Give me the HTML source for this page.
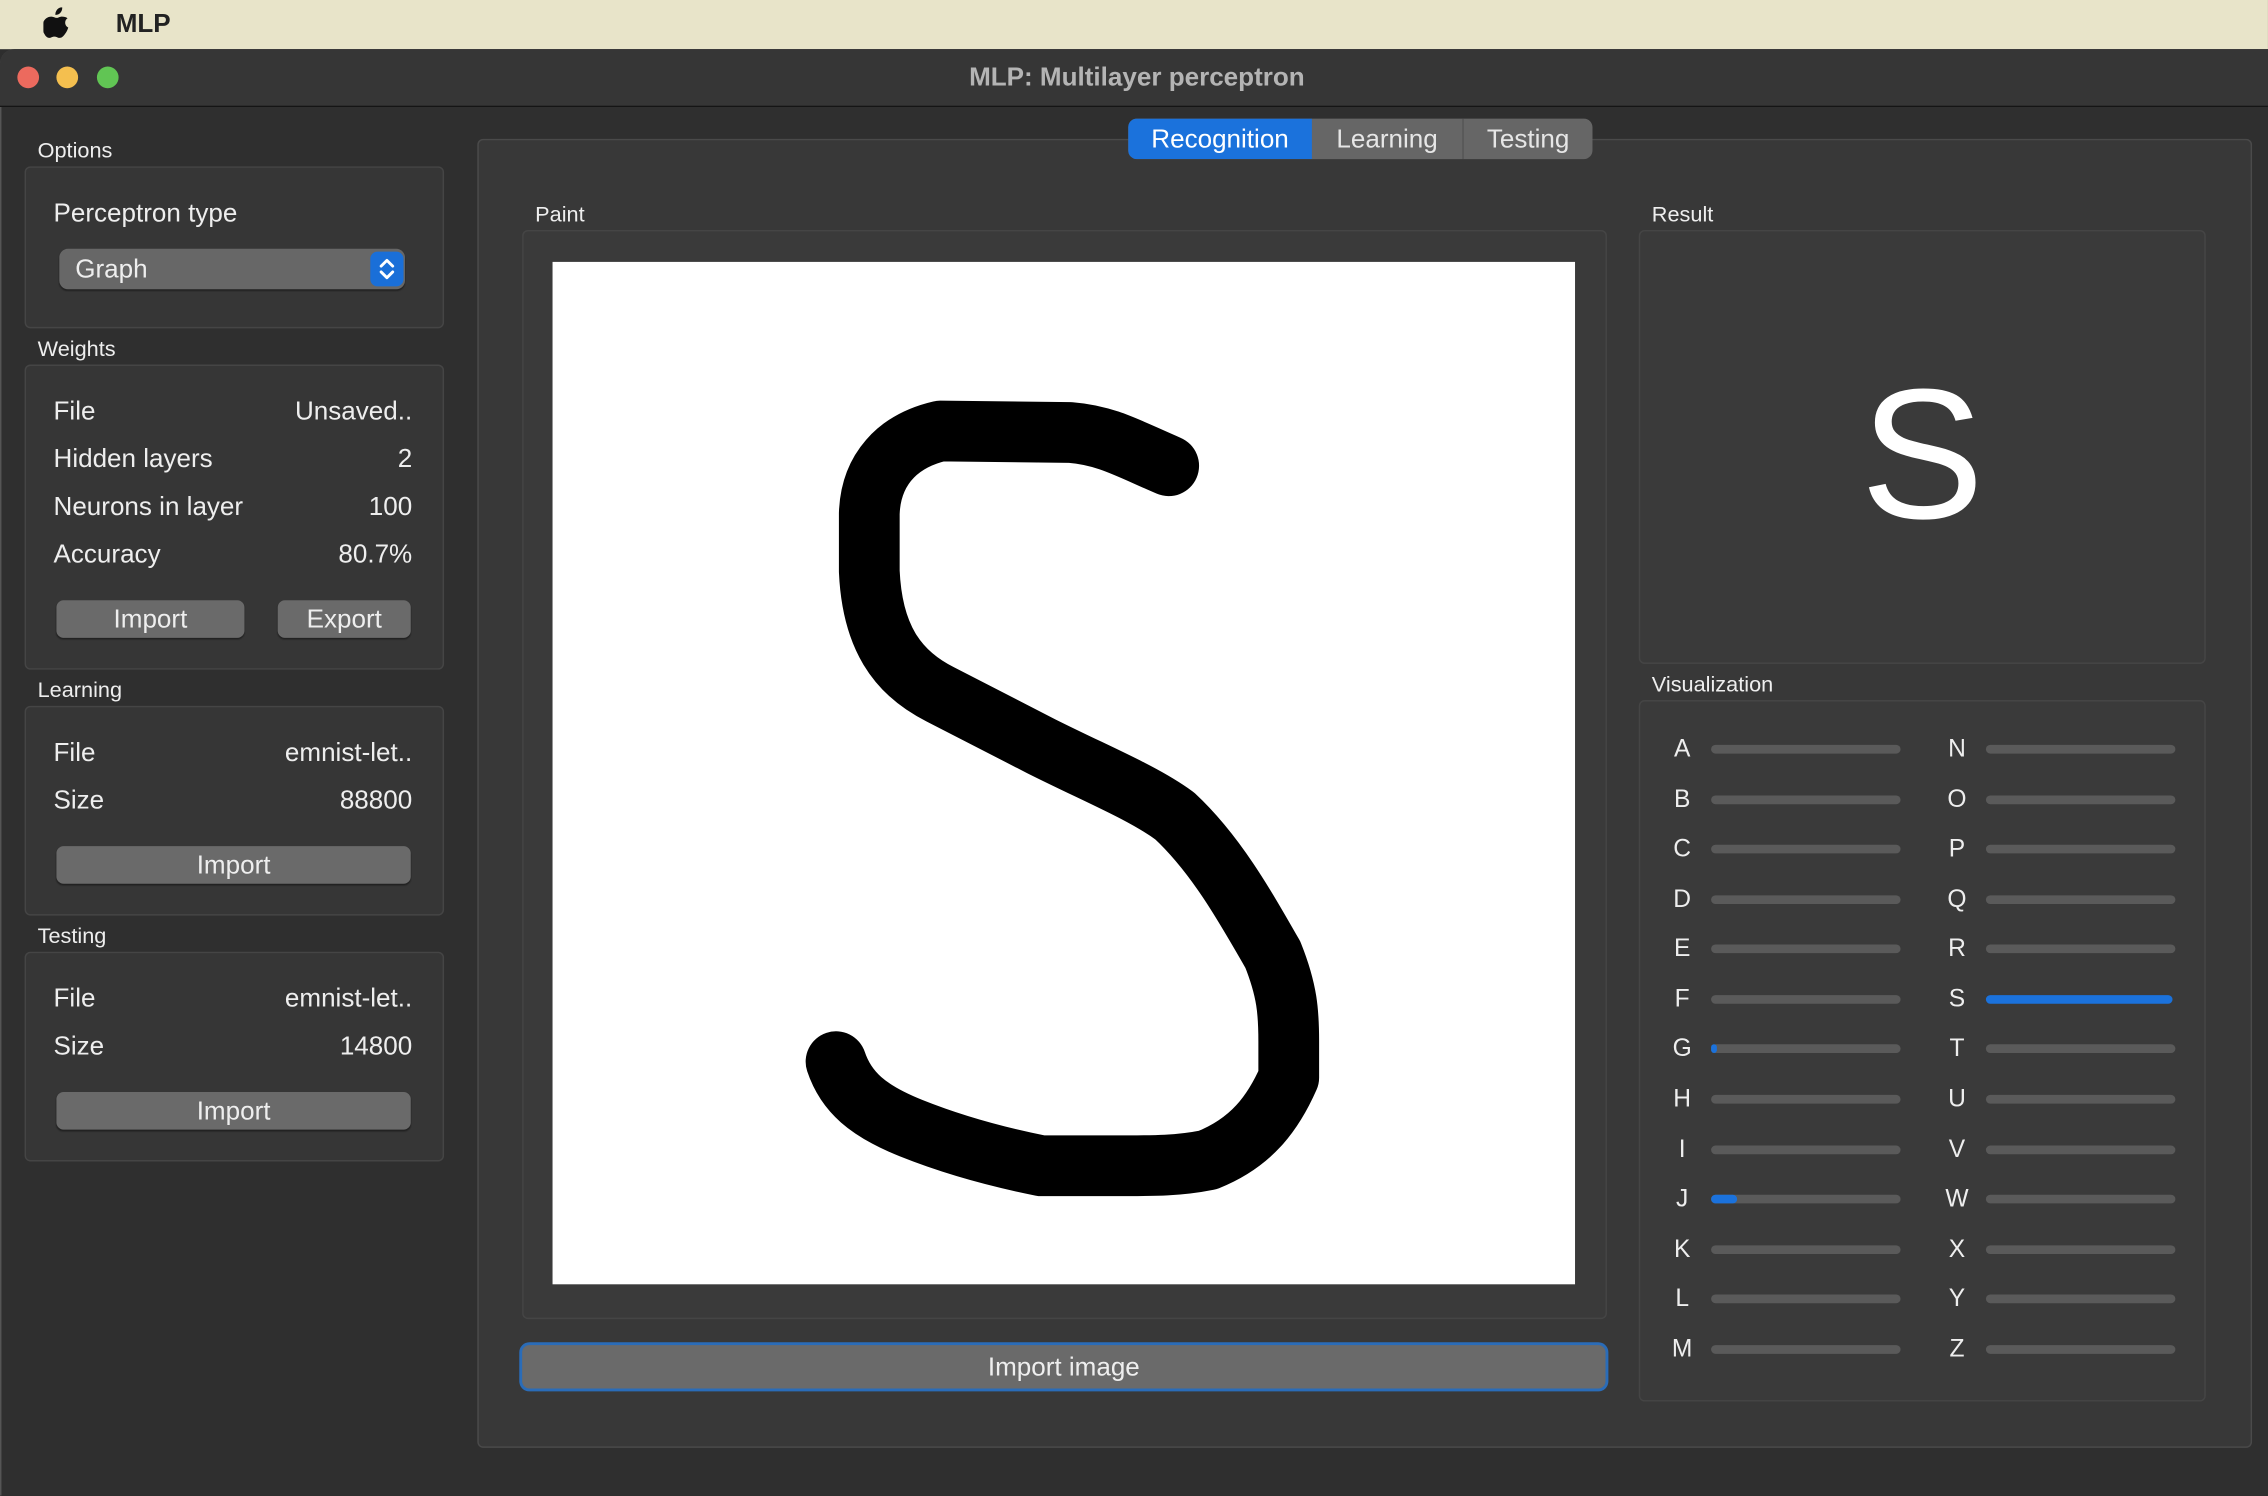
<!DOCTYPE html>
<html><head><meta charset="utf-8">
<style>
html,body{margin:0;padding:0;width:2268px;height:1464px;overflow:hidden;background:#2e2e2e;}
#w{position:absolute;left:0;top:0;width:1568px;height:1012px;transform:scale(1.4464);transform-origin:0 0;font-family:"Liberation Sans",sans-serif;color:#e6e6e6;}
.a{position:absolute;}
.menu{left:0;top:0;width:1568px;height:34px;background:#e8e4c9;}
.win{left:0;top:34px;width:1580px;height:1000px;background:#2f2f2f;border-top-left-radius:10px;border:1px solid #555;border-bottom:none;box-sizing:border-box;}
.title{left:0;top:34px;width:1568px;height:39px;background:#363636;border-top-left-radius:10px;border-bottom:1px solid #151515;}
.dot{width:15px;height:15px;border-radius:50%;top:46px;}
.lbl{font-size:15px;color:#eee;}
.box{background:#363636;border:1px solid #454545;border-radius:4px;box-sizing:border-box;}
.t{font-size:18px;color:#eee;}
.r{text-align:right;}
.btn{background:#6a6a6a;border-radius:5px;text-align:center;font-size:18px;color:#eee;box-shadow:0 1px 1px rgba(0,0,0,.4);line-height:26px;}
.let{font-size:17px;color:#eee;width:20px;text-align:center;}
.bar{height:6px;border-radius:3px;background:#5a5a5a;width:131px;}
</style></head><body><div id="w">
<div class="a menu"></div>
<svg class="a" style="left:30px;top:5px" width="19" height="22" viewBox="0 0 19 22"><path d="M13 0c.2 1.6-.5 3.2-1.5 4.1-1 1-2.3 1.3-3.2 1.2-.2-1.5.6-3 1.4-3.9C10.7.4 12.1-.1 13 0zM16.7 7.6c-2.4 1.5-2.1 5.3.5 6.4-.5 1.6-1.2 3.2-2.4 4.7-1 1.3-2 2.5-3.6 2.5-1.5 0-1.9-.9-3.6-.9s-2.2.9-3.6.9C2.400 21.200 1.300 19.700.5 18.200-1.300 14.900-1 9.800 1.900 7.700c1.100-.8 2.400-1.200 3.600-1.200 1.500 0 2.500.9 3.700.9 1.200 0 1.900-.9 3.700-.9 1.400 0 2.800.4 3.800 1.100z" fill="#111"/></svg>
<div class="a" style="left:80px;top:6px;font-size:18px;font-weight:bold;color:#222">MLP</div>
<div class="a win"></div>
<div class="a title"></div>
<div class="a dot" style="left:12px;background:#ec6a5e"></div>
<div class="a dot" style="left:39px;background:#f4bf4f"></div>
<div class="a dot" style="left:67px;background:#61c554"></div>
<div class="a" style="left:0;width:1572px;top:43px;text-align:center;font-size:18px;font-weight:bold;color:#b4b4b4">MLP: Multilayer perceptron</div>

<div class="a lbl" style="left:26px;top:96px">Options</div>
<div class="a box" style="left:17px;top:115px;width:290px;height:112px"></div>
<div class="a t" style="left:37px;top:137px">Perceptron type</div>
<div class="a" style="left:41px;top:172px;width:239px;height:28px;background:#676767;border-radius:6px;box-shadow:0 1px 1px rgba(0,0,0,.4)"></div>
<div class="a t" style="left:52px;top:176px">Graph</div>
<div class="a" style="left:256px;top:174px;width:23px;height:24px;background:#1a6fd8;border-radius:5px"></div>
<svg class="a" style="left:256px;top:174px" width="23" height="24"><path d="M7.5 10l4-4 4 4M7.5 14l4 4 4-4" stroke="#fff" stroke-width="2" fill="none" stroke-linecap="round" stroke-linejoin="round"/></svg>

<div class="a lbl" style="left:26px;top:233px">Weights</div>
<div class="a box" style="left:17px;top:252px;width:290px;height:211px"></div>
<div class="a t" style="left:37px;top:274px">File</div><div class="a t r" style="left:150px;width:135px;top:274px">Unsaved..</div>
<div class="a t" style="left:37px;top:307px">Hidden layers</div><div class="a t r" style="left:150px;width:135px;top:307px">2</div>
<div class="a t" style="left:37px;top:340px">Neurons in layer</div><div class="a t r" style="left:150px;width:135px;top:340px">100</div>
<div class="a t" style="left:37px;top:373px">Accuracy</div><div class="a t r" style="left:150px;width:135px;top:373px">80.7%</div>
<div class="a btn" style="left:39px;top:415px;width:130px;height:26px">Import</div>
<div class="a btn" style="left:192px;top:415px;width:92px;height:26px">Export</div>

<div class="a lbl" style="left:26px;top:469px">Learning</div>
<div class="a box" style="left:17px;top:488px;width:290px;height:145px"></div>
<div class="a t" style="left:37px;top:510px">File</div><div class="a t r" style="left:150px;width:135px;top:510px">emnist-let..</div>
<div class="a t" style="left:37px;top:543px">Size</div><div class="a t r" style="left:150px;width:135px;top:543px">88800</div>
<div class="a btn" style="left:39px;top:585px;width:245px;height:26px">Import</div>

<div class="a lbl" style="left:26px;top:639px">Testing</div>
<div class="a box" style="left:17px;top:658px;width:290px;height:145px"></div>
<div class="a t" style="left:37px;top:680px">File</div><div class="a t r" style="left:150px;width:135px;top:680px">emnist-let..</div>
<div class="a t" style="left:37px;top:713px">Size</div><div class="a t r" style="left:150px;width:135px;top:713px">14800</div>
<div class="a btn" style="left:39px;top:755px;width:245px;height:26px">Import</div>

<div class="a" style="left:330px;top:96px;width:1227px;height:905px;background:#383838;border:1px solid #4a4a4a;border-radius:4px;box-sizing:border-box"></div>
<div class="a" style="left:780px;top:82px;width:321px;height:28px;background:#666;border-radius:6px;overflow:hidden;font-size:18px;line-height:28px">
 <div class="a" style="left:0;top:0;width:127px;height:28px;background:#1b72dc;color:#fff;text-align:center">Recognition</div>
 <div class="a" style="left:127px;top:0;width:104px;height:28px;text-align:center;color:#e6e6e6">Learning</div>
 <div class="a" style="left:231px;top:0;width:1px;height:28px;background:#555"></div>
 <div class="a" style="left:232px;top:0;width:89px;height:28px;text-align:center;color:#e6e6e6">Testing</div>
</div>

<div class="a lbl" style="left:370px;top:140px">Paint</div>
<div class="a box" style="left:361px;top:159px;width:750px;height:753px;background:#3a3a3a"></div>
<svg class="a" style="left:382px;top:181px" width="707" height="707" viewBox="382 181 707 707"><rect x="382" y="181" width="707" height="707" fill="#fff"/>
<path d="M808,322 C780,310 765,301 740,299 L650,298 C620,305 602,325 601,355 L601,395 C603,440 620,465 650,480 L720,516 C760,536 790,548 812,564 C840,590 860,625 880,660 C890,685 891,700 891,720 L891,745 C880,770 865,790 835,802 C815,806 800,806 770,806 L720,806 C690,800 660,792 630,780 C600,768 585,755 578,734" fill="none" stroke="#000" stroke-width="42" stroke-linecap="round" stroke-linejoin="round"/></svg>
<div class="a btn" style="left:361px;top:930px;width:749px;height:30px;line-height:30px;box-shadow:0 0 0 2px #2a6cb8">Import image</div>

<div class="a lbl" style="left:1142px;top:140px">Result</div>
<div class="a box" style="left:1133px;top:159px;width:392px;height:300px;background:#3a3a3a"></div>
<div class="a" style="left:1133px;width:392px;top:240px;text-align:center;font-size:128px;color:#fff;line-height:150px">S</div>

<div class="a lbl" style="left:1142px;top:465px">Visualization</div>
<div class="a box" style="left:1133px;top:484px;width:392px;height:485px;background:#3a3a3a"></div>
<div id="viz"></div>
<script>
var L="ABCDEFGHIJKLM",R="NOPQRSTUVWXYZ",h="";
for(var i=0;i<13;i++){var y=518+i*34.58;
h+='<div class="a let" style="left:1153px;top:'+(y-10)+'px">'+L[i]+'</div>';
h+='<div class="a bar" style="left:1183px;top:'+(y-3)+'px">'+(L[i]=="G"?'<div style="width:4px;height:6px;background:#1b72dc;border-radius:3px"></div>':L[i]=="J"?'<div style="width:18px;height:6px;background:#1b72dc;border-radius:3px"></div>':'')+'</div>';
h+='<div class="a let" style="left:1343px;top:'+(y-10)+'px">'+R[i]+'</div>';
h+='<div class="a bar" style="left:1373px;top:'+(y-3)+'px;'+(R[i]=="S"?'background:#1b72dc;width:129px':'')+'"></div>';}
document.getElementById("viz").innerHTML=h;
</script>
</div></body></html>
